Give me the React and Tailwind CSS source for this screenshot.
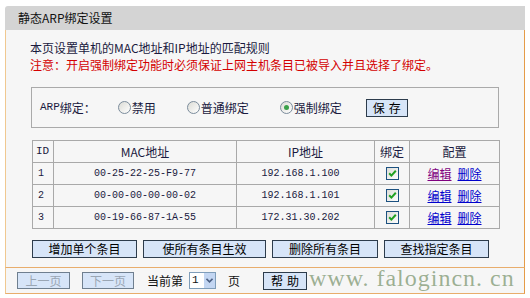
const rows = [
  { id: 1, mac: '00-25-22-25-F9-77', ip: '192.168.1.100', visited: true },
  { id: 2, mac: '00-00-00-00-00-02', ip: '192.168.1.101' },
  { id: 3, mac: '00-19-66-87-1A-55', ip: '172.31.30.202' },
]

function Radio({ checked, label }) {
  return (
    <label className="flex items-center">
      <span className="w-[13px] h-[13px] rounded-full border border-[#7b8c9c] bg-gradient-to-br from-[#dcdcd6] to-white flex items-center justify-center">
        {checked && <span className="w-[5px] h-[5px] rounded-full bg-[#3aa04a]" />}
      </span>
      <span className="ml-[1px]">{label}</span>
    </label>
  )
}

function Check() {
  return (
    <svg width="13" height="13" viewBox="0 0 13 13" className="mx-auto block">
      <defs>
        <linearGradient id="cb" x1="0" y1="0" x2="1" y2="1">
          <stop offset="0" stopColor="#dcdcd6" />
          <stop offset="1" stopColor="#ffffff" />
        </linearGradient>
      </defs>
      <rect x="0.5" y="0.5" width="12" height="12" fill="url(#cb)" stroke="#1c5180" />
      <path d="M3.2 6.2 L5.4 8.6 L9.8 3.8" fill="none" stroke="#21a121" strokeWidth="2" />
    </svg>
  )
}

function Btn({ children, className = '' }) {
  return (
    <button
      className={`h-[18px] bg-[#d7e5f8] border border-[#2d3c4c] text-[12px] leading-none text-black ${className}`}
    >
      {children}
    </button>
  )
}

export default function App() {
  return (
    <div className="relative w-[530px] h-[298px] bg-white pt-[6px] pl-[5px] font-['Noto_Sans_CJK_SC',sans-serif] text-[12px] text-[#1a1a40] overflow-hidden">
      <div className="w-[520px]">
        <div className="h-[24px] bg-[#d4d4d4] rounded-tl-[3px] pl-[13px] flex items-center text-[#111]">
          静态ARP绑定设置
        </div>
        <div className="bg-[#f6f6f6] border-l border-l-[#f0c890] border-r border-r-[#e59b47] border-b border-b-[#e8ad6c] pb-[9px]">
          <div className="pl-[24px] pt-[9px] leading-[17px]">
            <div>本页设置单机的MAC地址和IP地址的匹配规则</div>
            <div className="text-[#d40000]">注意：开启强制绑定功能时必须保证上网主机条目已被导入并且选择了绑定。</div>
          </div>

          <div className="ml-[25px] mt-[14px] w-[468px] h-[41px] border border-[#aaaaaa] flex items-center pl-[8px]">
            <span className="font-['Liberation_Mono','Noto_Sans_CJK_SC',monospace] text-[11px]">ARP</span>
            <span>绑定：</span>
            <div className="ml-[22px] w-[69px]"><Radio label="禁用" /></div>
            <div className="w-[93px]"><Radio label="普通绑定" /></div>
            <div className="w-[86px]"><Radio checked label="强制绑定" /></div>
            <Btn className="w-[42px] tracking-[4px] pl-[4px]">保存</Btn>
          </div>

          <table className="ml-[26px] mt-[12px] w-[468px] border-collapse border border-[#a9a9a9] text-center">
            <thead>
              <tr className="h-[22px]">
                <th className="w-[21px] border border-[#a9a9a9] font-normal text-left pl-[3px] font-['Liberation_Mono',monospace] text-[11px]">ID</th>
                <th className="w-[183px] border border-[#a9a9a9] font-normal">MAC地址</th>
                <th className="w-[138px] border border-[#a9a9a9] font-normal">IP地址</th>
                <th className="w-[35px] border border-[#a9a9a9] font-normal">绑定</th>
                <th className="border border-[#a9a9a9] font-normal">配置</th>
              </tr>
            </thead>
            <tbody>
              {rows.map((r) => (
                <tr key={r.id} className="h-[22px]">
                  <td className="border border-[#a9a9a9] text-left pl-[5px] font-['Liberation_Mono',monospace] text-[10px]">{r.id}</td>
                  <td className="border border-[#a9a9a9] font-['Liberation_Mono',monospace] text-[10px]">{r.mac}</td>
                  <td className="border border-[#a9a9a9] font-['Liberation_Mono',monospace] text-[10px] pr-[10px]">{r.ip}</td>
                  <td className="border border-[#a9a9a9]"><Check /></td>
                  <td className="border border-[#a9a9a9]">
                    <span className={`underline ${r.visited ? 'text-[#800080]' : 'text-[#0000cc]'}`}>编辑</span>
                    <span className="underline text-[#0000cc] ml-[6px]">删除</span>
                  </td>
                </tr>
              ))}
            </tbody>
          </table>

          <div className="ml-[26px] mt-[11px] flex gap-[6px]">
            <Btn className="w-[105px]">增加单个条目</Btn>
            <Btn className="w-[123px]">使所有条目生效</Btn>
            <Btn className="w-[106px]">删除所有条目</Btn>
            <Btn className="w-[105px]">查找指定条目</Btn>
          </div>
        </div>

        <div className="h-[26px] bg-[#f6f6f6] border-l border-l-[#f0c890] border-r border-r-[#e59b47] border-b border-b-[#e8ad6c] flex items-center pl-[11px] text-[#111]">
          <button className="w-[53px] h-[17px] bg-[#d7e5f8] border border-[#6f7f8f] text-[#9aa6b4] text-[12px] leading-none">上一页</button>
          <button className="ml-[12px] w-[52px] h-[17px] bg-[#d7e5f8] border border-[#6f7f8f] text-[#9aa6b4] text-[12px] leading-none">下一页</button>
          <span className="ml-[13px]">当前第</span>
          <div className="ml-[6px] w-[27px] h-[17px] border border-[#7f9db9] bg-white flex">
            <span className="flex-1 pl-[2px] leading-[15px] font-['Liberation_Mono',monospace] text-[11px]">1</span>
            <span className="w-[11px] bg-[#c3d6f2] flex items-center justify-center">
              <svg width="7" height="5" viewBox="0 0 7 5">
                <path d="M0.5 0.8 L3.5 3.8 L6.5 0.8" fill="none" stroke="#4d6185" strokeWidth="1.6" />
              </svg>
            </span>
          </div>
          <span className="ml-[12px]">页</span>
          <Btn className="ml-[23px] w-[44px] h-[17px] tracking-[4px] pl-[4px]">帮助</Btn>
        </div>
      </div>

      <div className="absolute left-[309px] top-[266px] font-['Liberation_Serif',serif] text-[24px] tracking-[1px] text-[#5f8050]/60 leading-none pointer-events-none whitespace-nowrap">
        www. falogincn. cn
      </div>
    </div>
  )
}
